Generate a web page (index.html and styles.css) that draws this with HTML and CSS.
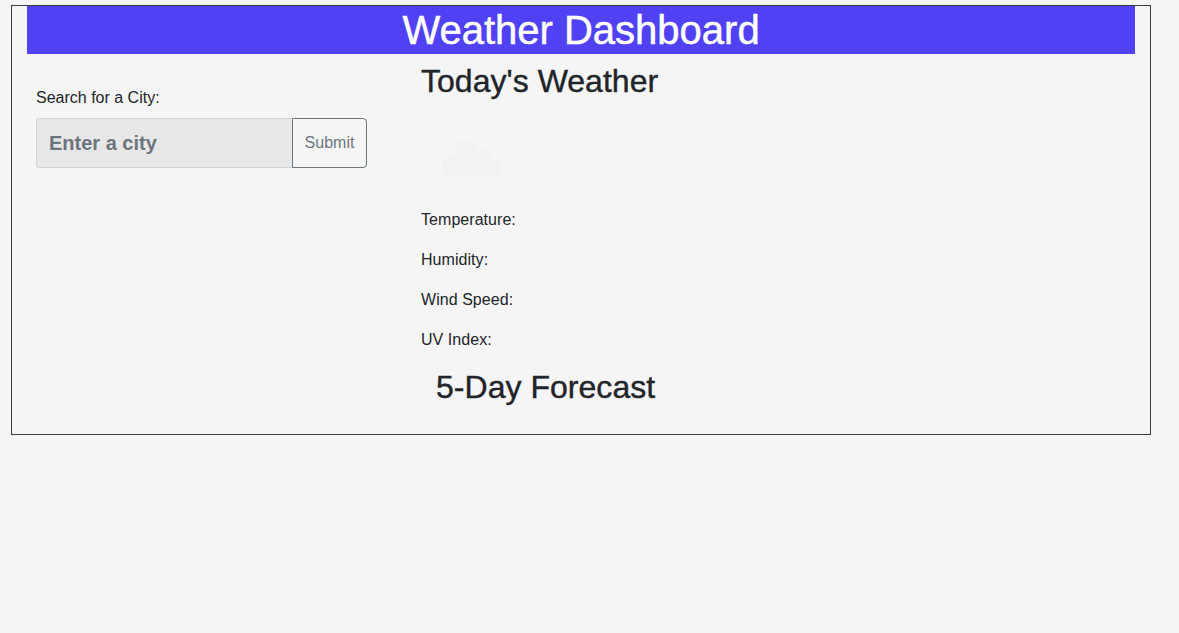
FILE: index.html
```html
<!DOCTYPE html>
<html lang="en">
<head>
<meta charset="utf-8">
<title>Weather Dashboard</title>
<link rel="stylesheet" href="styles.css">
</head>
<body>
<div class="container">
  <header class="banner"><h1 class="banner-title">Weather Dashboard</h1></header>
  <div class="columns">
    <form class="search">
      <label class="search-label" for="city">Search for a City:</label>
      <div class="input-group">
        <input class="city-input" id="city" type="text" placeholder="Enter a city">
        <button class="submit" type="button">Submit</button>
      </div>
    </form>
    <main class="weather">
      <h2 class="today-title">Today's Weather</h2>
      <svg class="weather-icon" viewBox="0 0 100 100" aria-hidden="true">
        <circle cx="32.500" cy="57.700" r="11.400"/>
        <circle cx="45.800" cy="43.700" r="12"/>
        <circle cx="63.300" cy="48.700" r="6.800"/>
        <circle cx="71.500" cy="60.400" r="8.700"/>
        <path d="M32.500 69.100V50L45 43L57.800 44L63.300 48.700H70V56L71.500 69.100Z"/>
      </svg>
      <p class="reading">Temperature:</p>
      <p class="reading">Humidity:</p>
      <p class="reading">Wind Speed:</p>
      <p class="reading">UV Index:</p>
      <h2 class="forecast-title">5-Day Forecast</h2>
    </main>
  </div>
</div>
</body>
</html>
```
FILE: styles.css
```css
* { box-sizing: border-box; }
body {
  margin: 0;
  padding: 5px 0 0 11px;
  background: #f5f5f5;
  color: #212529;
  font: 400 16px/24px "Liberation Sans", Arial, sans-serif;
}
h1, h2, p { margin: 0; font-weight: 400; }
.container {
  width: 1140px;
  height: 430px;
  padding: 0 15px;
  border: 1px solid #343a40;
}
.banner {
  height: 48px;
  background: #5041f5;
  color: #fff;
  text-align: center;
}
.banner-title { font-size: 40px; line-height: 48px; -webkit-text-stroke: 0.5px; }
.columns { display: flex; }
.search { width: 394px; padding: 32px 0 0 9px; }
.search-label { display: block; margin-bottom: 8px; }
.input-group { display: flex; width: 331px; height: 50px; }
.city-input {
  width: 256px;
  padding: 0 12px;
  border: 1px solid #ced4da;
  border-right: 0;
  border-radius: 3px 0 0 3px;
  background: #e7e7e7;
  font: bold 20px/30px "Liberation Sans", Arial, sans-serif;
}
.city-input::placeholder { color: #6c757d; opacity: 1; }
.submit {
  width: 75px;
  padding: 0;
  border: 1px solid #6c757d;
  border-radius: 0 4px 4px 0;
  background: transparent;
  color: #6c757d;
  font: 400 16px/24px "Liberation Sans", Arial, sans-serif;
}
.weather { padding-top: 8px; }
.today-title, .forecast-title {
  font-size: 32px;
  line-height: 38px;
  letter-spacing: 0.03px;
  -webkit-text-stroke: 0.4px;
}
.today-title { margin-bottom: 8px; }
.weather-icon { display: block; width: 100px; height: 100px; fill: #f2f2f0; }
.reading { margin-bottom: 16px; letter-spacing: 0.05px; }
.forecast-title { padding-left: 15px; }
```
